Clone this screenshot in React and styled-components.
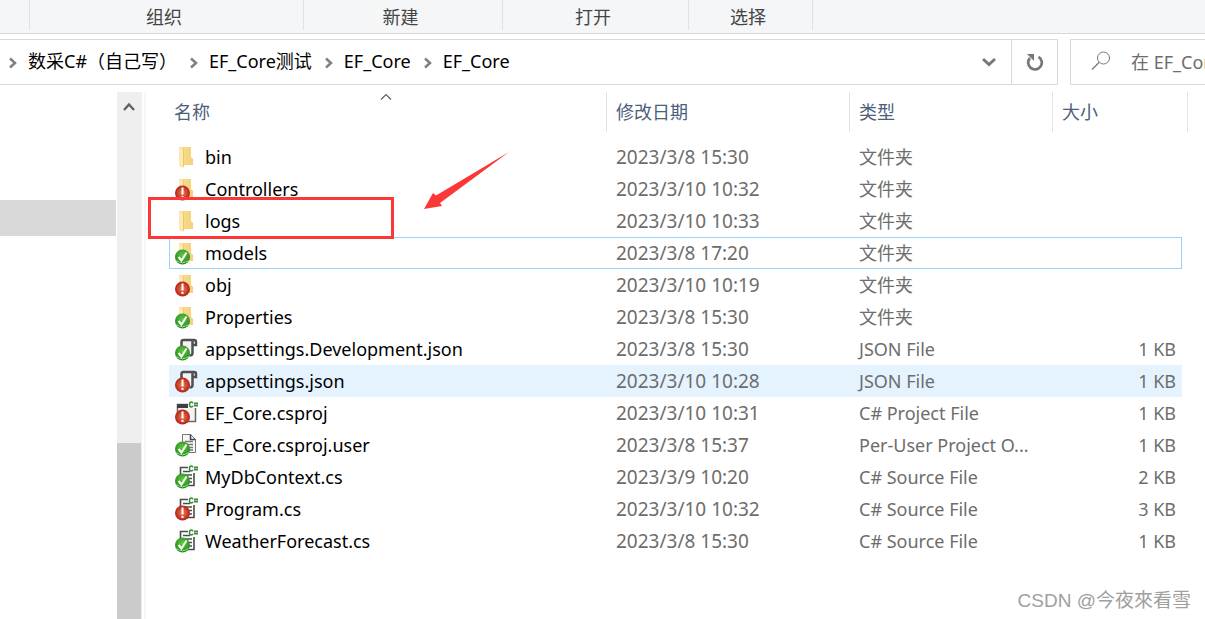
import React from 'react';
import styled, { createGlobalStyle } from 'styled-components';

const Global = createGlobalStyle`
  * { box-sizing: border-box; }
  body { margin: 0; background: #fff; overflow: hidden; font-family: "Noto Sans", "Noto Sans CJK SC", sans-serif; font-size: 18px; color: #000; }
  button, input, table { font: inherit; color: inherit; }
  svg { flex: none; }
`;

const Page = styled.div`
  display: flex;
  flex-direction: column;
  height: 100vh;
  position: relative;
  overflow: hidden;
`;

const Ribbon = styled.div`
  display: flex;
  flex: none;
  height: 34px;
  background: #f4f6f8;
  border-bottom: 1px solid #d8d9da;
`;

const RibbonGroup = styled.div`
  width: ${p => p.$w}px;
  height: 30px;
  border-right: 1px solid #dfe1e3;
  color: #444;
  text-align: center;
  line-height: 34px;
  padding-right: 5px;
`;

const AddressRow = styled.div`
  display: flex;
  flex: none;
  height: 46px;
  margin-top: 5px;
`;

const AddressBar = styled.nav`
  flex: 1;
  display: flex;
  align-items: center;
  border: solid #d9d9d9;
  border-width: 1px 0;
  padding-left: 7px;
`;

const Crumb = styled.a`
  color: #000;
  text-decoration: none;
  white-space: nowrap;
  line-height: 24px;
  padding-bottom: 2px;
`;

const CrumbArrow = styled.svg`
  width: 10px;
  height: 12px;
  margin: 2px 11px 0 ${p => p.$before || 0}px;
`;

const IconButton = styled.button`
  display: flex;
  align-items: center;
  justify-content: center;
  width: ${p => p.$w}px;
  margin-left: ${p => (p.$push ? 'auto' : '0')};
  padding: 0;
  background: #fff;
  border: ${p => (p.$boxed ? '1px solid #d9d9d9' : '0')};
`;

const SearchBox = styled.label`
  display: flex;
  align-items: center;
  width: 135px;
  margin-left: 12px;
  padding: 0 0 2px 20px;
  border: solid #d9d9d9;
  border-width: 1px 0 1px 1px;
  overflow: hidden;
`;

const SearchInput = styled.input`
  flex: none;
  width: 180px;
  margin-left: 20px;
  padding: 0;
  border: 0;
  outline: 0;
  background: none;
  color: #6d6d6d;
`;

const Body = styled.div`
  flex: 1;
  display: flex;
  min-height: 0;
  padding-top: 7px;
`;

const Tree = styled.aside`
  width: 117px;
  flex: none;
  padding-top: 108px;
`;

const TreeSelection = styled.div`
  height: 36px;
  margin-right: 1px;
  background: #d9d9d9;
`;

const Scrollbar = styled.div`
  display: flex;
  flex-direction: column;
  justify-content: space-between;
  flex: none;
  width: 25px;
  background: #efefef;
`;

const ScrollUp = styled.button`
  display: flex;
  align-items: center;
  justify-content: center;
  width: 24px;
  height: 30px;
  padding: 0;
  border: 0;
  background: none;
`;

const Thumb = styled.div`
  width: 24px;
  height: 176px;
  background: #cbcbcb;
`;

const Files = styled.main`
  position: relative;
  flex: 1;
  min-width: 0;
  margin-left: 2px;
  padding: 0 17px 0 23px;
  border-left: 2px solid #f6f6f6;
`;

const FileTable = styled.table`
  width: 100%;
  table-layout: fixed;
  border-collapse: separate;
  border-spacing: 0;
`;

const Col = styled.col`
  width: ${p => (p.$w ? `${p.$w}px` : 'auto')};
`;

const Head = styled.th`
  position: relative;
  height: 40px;
  padding: 0 0 0 ${p => p.$pad || 9}px;
  border-right: 1px solid #e2e2e2;
  color: #4c607a;
  font-weight: 400;
  line-height: 24px;
  text-align: left;
`;

const SortMark = styled.svg`
  position: absolute;
  left: 50%;
  top: 1px;
  margin-left: -8px;
`;

const Gap = styled.tr`
  height: 9px;
`;

const Cell = styled.td`
  height: 32px;
  padding: 0 ${p => (p.$right ? 5 : 0)}px 0 9px;
  border: solid transparent;
  border-width: 1px 0;
  font-size: ${p => (p.$large ? 19 : 18)}px;
  line-height: 24px;
  color: #6d6d6d;
  text-align: ${p => (p.$right ? 'right' : 'left')};
  white-space: nowrap;
`;

const NameCell = styled(Cell)`
  padding-left: 4px;
  border-left-width: 1px;
  color: #000;
`;

const SizeCell = styled(Cell)`
  border-right-width: 1px;
`;

const Row = styled.tr`
  ${Cell} {
    background: ${p => (p.$hover ? '#e5f3ff' : 'transparent')};
    border-color: ${p => (p.$focus ? '#99d1ff' : p.$hover ? '#e5f3ff' : 'transparent')};
  }
`;

const Name = styled.div`
  display: flex;
  align-items: center;
  gap: 7px;
  height: 30px;
`;

const Highlight = styled.div`
  position: absolute;
  left: 2px;
  top: 105px;
  width: 246px;
  height: 42px;
  border: 3px solid #fb3737;
`;

const Arrow = styled.svg`
  position: absolute;
  left: 277px;
  top: 58px;
`;

const Watermark = styled.div`
  position: absolute;
  right: 14px;
  bottom: 5px;
  color: #a0a0a0;
  font-family: "Liberation Sans", "Noto Sans CJK TC", sans-serif;
  font-size: 19px;
  line-height: 26px;
`;

function Folder() {
  return (
    <g>
      <path d="M5 3h12v10l2 2v6H5z" fill="url(#folder)" />
      <path d="M5 3l4 2v19l-4-2z" fill="#fdeab0" />
      <path d="M9 5l1-1v18l-1 2z" fill="#ecc96f" />
    </g>
  );
}

function Script() {
  return (
    <g fill="none" stroke="#505050">
      <path d="M8 4h10v15h-8z" fill="#f3f3f3" stroke="none" />
      <path d="M7.500 13V6q0-2 2-2H20q2 0 2 2v3h-4" strokeWidth="2.500" />
      <path d="M18.500 5v12q0 2.500-3 2.500" strokeWidth="2.500" />
    </g>
  );
}

function Sharp() {
  return (
    <g fill="none" stroke="#388a34">
      <path d="M19 3.200Q18.500 2 17.300 2 15.500 2 15.500 4.500T17.300 7Q18.500 7 19 5.800" strokeWidth="1.500" />
      <path d="M21 2v5M23 2v5M20 3.500h4M20 5.500h4" />
    </g>
  );
}

function Project() {
  return (
    <g>
      <path d="M3.500 4.500h18v17h-18z" fill="#f3f3f3" stroke="#666" strokeWidth="1.500" />
      <path d="M3 4h11v4H3z" fill="#404040" />
      <path d="M14 0h10v8H14z" fill="#fff" />
      <Sharp />
    </g>
  );
}

function Doc() {
  return (
    <g>
      <path d="M8.500 2.500h8l5 5v13h-13z" fill="#f7f7f7" stroke="#777" />
      <path d="M16.500 2.500v5h5" fill="none" stroke="#444" strokeWidth="1.500" />
      <path d="M11 9.500h8M11 12.500h8M11 15.500h8M11 18h8" fill="none" stroke="#777" strokeWidth="1.500" />
    </g>
  );
}

function Source() {
  return (
    <g>
      <path d="M6.500 11V3.500H14M20 9v12.500h-9" fill="none" stroke="#4c4c4c" strokeWidth="1.600" />
      <path d="M9 7.500h7M9 11h9M9 14.500h9M11 18h7" fill="none" stroke="#4c4c4c" strokeWidth="1.600" />
      <Sharp />
    </g>
  );
}

const drawings = { folder: Folder, script: Script, project: Project, doc: Doc, source: Source };

function FileIcon({ kind, status }) {
  const Drawing = drawings[kind];
  return (
    <svg width="24" height="26" viewBox="0 0 24 26" aria-hidden="true">
      <defs>
        <linearGradient id="folder"><stop offset="0" stopColor="#f9df92" /><stop offset="1" stopColor="#f3d178" /></linearGradient>
        <radialGradient id="ok" cx=".5" cy=".4" r=".6"><stop offset="0" stopColor="#64cb45" /><stop offset="1" stopColor="#21881b" /></radialGradient>
        <radialGradient id="bad" cx=".5" cy=".5" r=".5"><stop offset="0" stopColor="#e9835b" /><stop offset="1" stopColor="#b81f14" /></radialGradient>
      </defs>
      <Drawing />
      {status && <circle cx="8.500" cy="17" r="7.500" fill={`url(#${status})`} />}
      {status === 'ok' && <path d="M4.500 17l3 3.500L12.500 12.500" fill="none" stroke="#fff" strokeWidth="2" />}
      {status === 'ok' && <path d="M2.500 20.500q6 4.500 12 0" fill="none" stroke="#a5dc94" />}
      {status === 'bad' && <path d="M8.500 11.500v7M8.500 20v2" stroke="#fff" strokeWidth="2" />}
    </svg>
  );
}

const files = [
  ['bin', '2023/3/8 15:30', '文件夹', '', 'folder'],
  ['Controllers', '2023/3/10 10:32', '文件夹', '', 'folder', 'bad'],
  ['logs', '2023/3/10 10:33', '文件夹', '', 'folder'],
  ['models', '2023/3/8 17:20', '文件夹', '', 'folder', 'ok'],
  ['obj', '2023/3/10 10:19', '文件夹', '', 'folder', 'bad'],
  ['Properties', '2023/3/8 15:30', '文件夹', '', 'folder', 'ok'],
  ['appsettings.Development.json', '2023/3/8 15:30', 'JSON File', '1 KB', 'script', 'ok'],
  ['appsettings.json', '2023/3/10 10:28', 'JSON File', '1 KB', 'script', 'bad'],
  ['EF_Core.csproj', '2023/3/10 10:31', 'C# Project File', '1 KB', 'project', 'bad'],
  ['EF_Core.csproj.user', '2023/3/8 15:37', 'Per-User Project O...', '1 KB', 'doc', 'ok'],
  ['MyDbContext.cs', '2023/3/9 10:20', 'C# Source File', '2 KB', 'source', 'ok'],
  ['Program.cs', '2023/3/10 10:32', 'C# Source File', '3 KB', 'source', 'bad'],
  ['WeatherForecast.cs', '2023/3/8 15:30', 'C# Source File', '1 KB', 'source', 'ok'],
];

function Chevron(props) {
  return (
    <CrumbArrow viewBox="0 0 10 12" {...props}>
      <path d="M3 1.500L8 6l-5 4.500" fill="none" stroke="#808080" strokeWidth="2.500" />
    </CrumbArrow>
  );
}

export default function App() {
  return (
    <Page>
      <Global />
      <Ribbon>
        <RibbonGroup $w={30} />
        <RibbonGroup $w={274}>组织</RibbonGroup>
        <RibbonGroup $w={199}>新建</RibbonGroup>
        <RibbonGroup $w={186}>打开</RibbonGroup>
        <RibbonGroup $w={124}>选择</RibbonGroup>
      </Ribbon>
      <AddressRow>
        <AddressBar>
          <Chevron />
          <Crumb href="#">数采C#（自己写）</Crumb>
          <Chevron $before={11} />
          <Crumb href="#">EF_Core测试</Crumb>
          <Chevron $before={11} />
          <Crumb href="#">EF_Core</Crumb>
          <Chevron $before={11} />
          <Crumb href="#">EF_Core</Crumb>
          <IconButton $w={44} $push aria-label="展开">
            <svg width="14" height="10" viewBox="0 0 14 10"><path d="M1 2l6 5.500L13 2" fill="none" stroke="#777" strokeWidth="3" /></svg>
          </IconButton>
        </AddressBar>
        <IconButton $w={47} $boxed aria-label="刷新">
          <svg width="18" height="18" viewBox="0 0 18 18"><path d="M4 5A6.800 6.800 0 1 0 12.500 3.800" fill="none" stroke="#777" strokeWidth="2.700" /><path d="M1 1h7v7z" fill="#777" /></svg>
        </IconButton>
        <SearchBox>
          <svg width="20" height="20" viewBox="0 0 20 20"><circle cx="12.500" cy="7" r="6" fill="none" stroke="#777" /><path d="M8 11.500L1 18.500" stroke="#777" strokeWidth="1.300" /></svg>
          <SearchInput aria-label="搜索" defaultValue="在 EF_Core 中搜索" />
        </SearchBox>
      </AddressRow>
      <Body>
        <Tree><TreeSelection /></Tree>
        <Scrollbar>
          <ScrollUp aria-label="向上滚动">
            <svg width="12" height="10" viewBox="0 0 12 10"><path d="M1 8l5-5.500L11 8" fill="none" stroke="#606060" strokeWidth="2.300" /></svg>
          </ScrollUp>
          <Thumb />
        </Scrollbar>
        <Files>
          <FileTable>
            <colgroup><Col /><Col $w={243} /><Col $w={203} /><Col $w={129} /><Col $w={6} /></colgroup>
            <thead>
              <tr>
                <Head $pad={5}>
                  名称
                  <SortMark width="12" height="7" viewBox="0 0 12 7"><path d="M1 6.500l5-5 5 5" fill="none" stroke="#606060" strokeWidth="1.200" /></SortMark>
                </Head>
                <Head>修改日期</Head>
                <Head>类型</Head>
                <Head colSpan={2}>大小</Head>
              </tr>
            </thead>
            <tbody>
              <Gap />
              {files.map(([name, date, type, size, kind, status]) => (
                <Row key={name} $hover={name === 'appsettings.json'} $focus={name === 'models'}>
                  <NameCell><Name><FileIcon kind={kind} status={status} />{name}</Name></NameCell>
                  <Cell $large>{date}</Cell>
                  <Cell>{type}</Cell>
                  <SizeCell $right>{size}</SizeCell>
                </Row>
              ))}
            </tbody>
          </FileTable>
          <Highlight />
          <Arrow width="88" height="62" viewBox="0 0 88 62">
            <path d="M86 2L17 53l2 3L1 59 10 43l3 2.500z" fill="#fb3737" />
          </Arrow>
        </Files>
      </Body>
      <Watermark>CSDN @今夜來看雪</Watermark>
    </Page>
  );
}
